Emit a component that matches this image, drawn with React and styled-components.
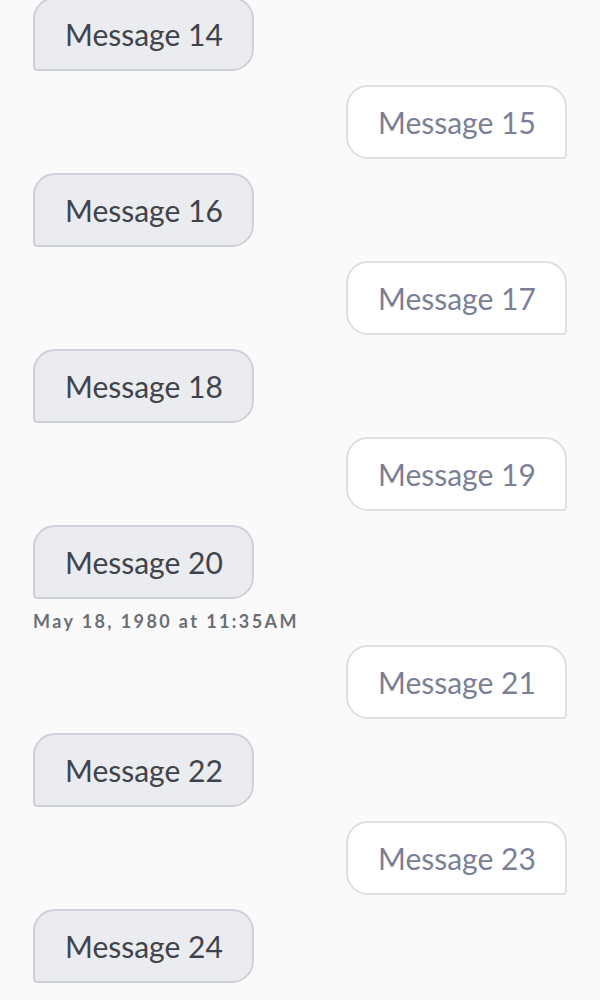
import React from 'react'
import styled, { createGlobalStyle } from 'styled-components'

const GlobalStyle = createGlobalStyle`
  html, body {
    margin: 0;
    padding: 0;
    background: #fafafa;
    overflow: hidden;
  }
  body {
    font-family: Lato, "Open Sans", sans-serif;
  }
`

const messages = [
  { id: 14, side: 'left' },
  { id: 15, side: 'right' },
  { id: 16, side: 'left' },
  { id: 17, side: 'right' },
  { id: 18, side: 'left' },
  { id: 19, side: 'right' },
  { id: 20, side: 'left', time: 'May 18, 1980 at 11:35AM' },
  { id: 21, side: 'right' },
  { id: 22, side: 'left' },
  { id: 23, side: 'right' },
  { id: 24, side: 'left' },
]

const App = () => {
  return (
    <>
      <GlobalStyle />
      <Thread>
        {messages.map(m => (
          <Row key={m.id} $side={m.side}>
            <Bubble $side={m.side}>Message {m.id}</Bubble>
            {m.time && <Stamp>{m.time}</Stamp>}
          </Row>
        ))}
      </Thread>
    </>
  )
}

export default App

const Thread = styled.div`
  display: flex;
  flex-direction: column;
  gap: 14px;
  padding: 0 33px;
  margin-top: -3px;
`

const Row = styled.div`
  display: flex;
  flex-direction: column;
  align-items: ${props => (props.$side === 'left' ? 'flex-start' : 'flex-end')};
`

const Bubble = styled.div`
  box-sizing: border-box;
  width: 221px;
  height: 74px;
  display: flex;
  align-items: center;
  padding: 0 0 0 30px;
  white-space: nowrap;
  font-size: 30px;
  line-height: 40px;
  border-radius: 22px;
  border: 2px solid ${props => (props.$side === 'left' ? '#cfd1d8' : '#dcdfe4')};
  background: ${props => (props.$side === 'left' ? '#ebecf0' : '#ffffff')};
  color: ${props => (props.$side === 'left' ? '#40434c' : '#7a8196')};
  border-bottom-left-radius: ${props => (props.$side === 'left' ? '4px' : '22px')};
  border-bottom-right-radius: ${props => (props.$side === 'right' ? '4px' : '22px')};
`

const Stamp = styled.div`
  margin-top: 10px;
  margin-bottom: -2px;
  font-size: 18px;
  line-height: 24px;
  font-weight: 700;
  letter-spacing: 2.4px;
  color: #6b6e75;
`
